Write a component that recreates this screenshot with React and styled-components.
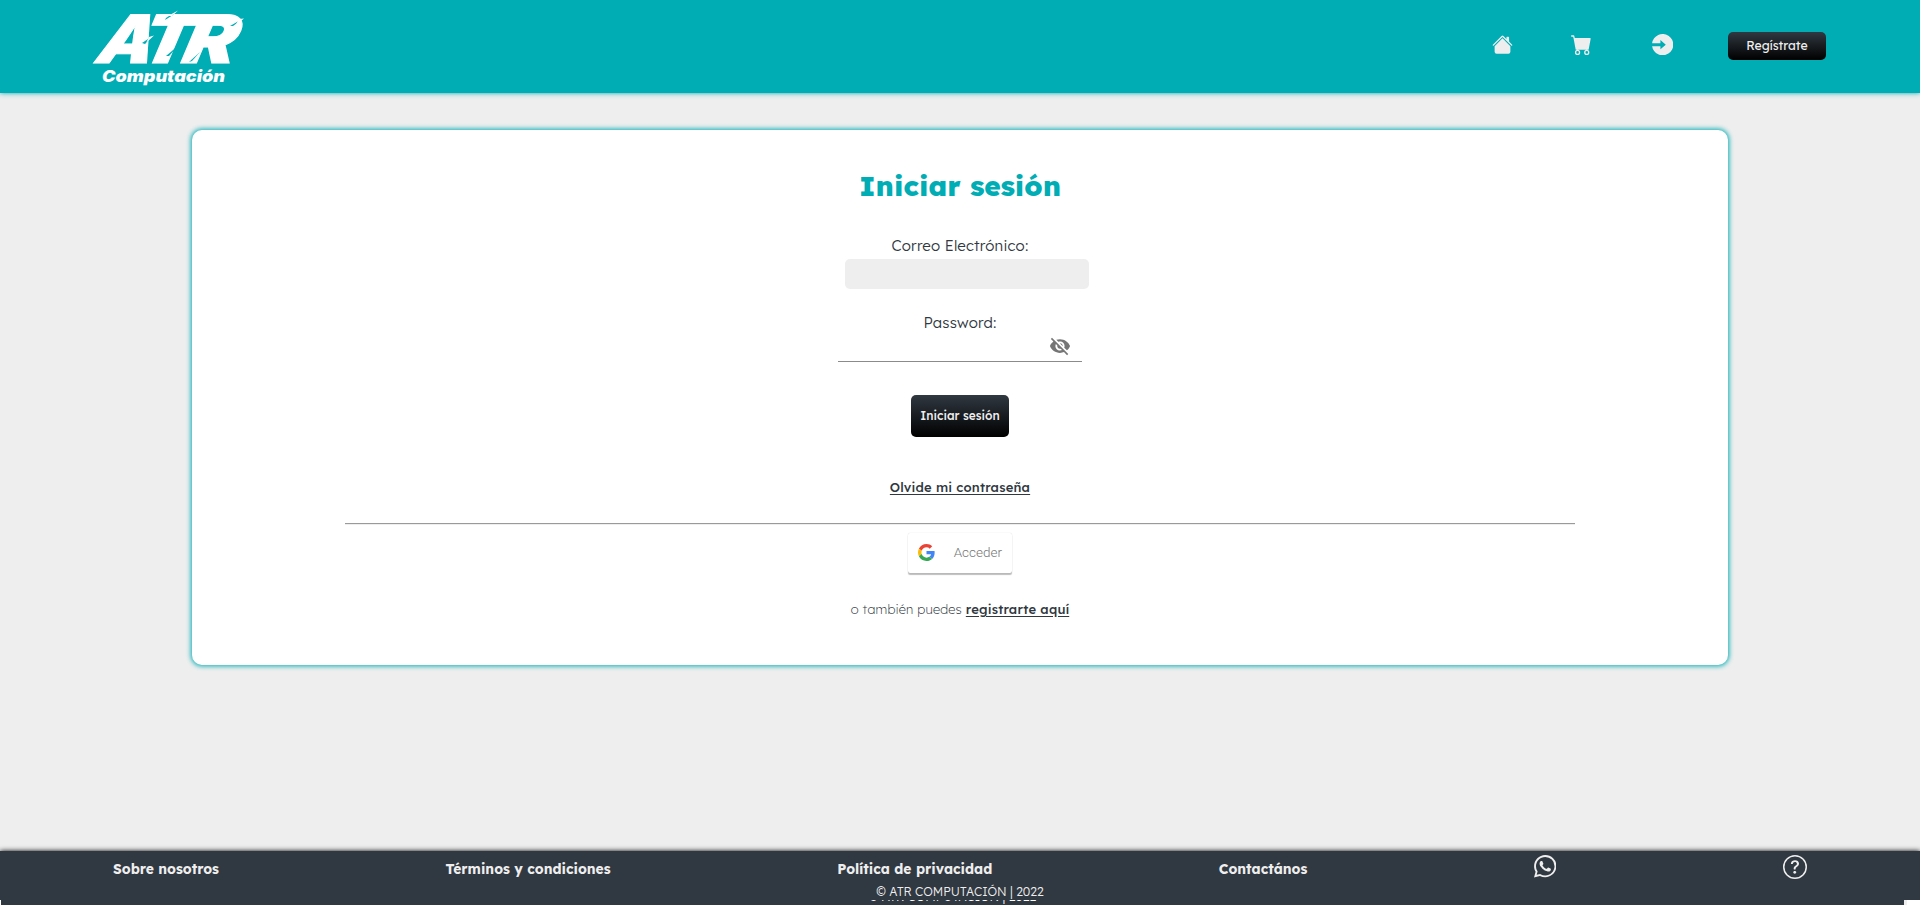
import React from "react";
import styled, { createGlobalStyle } from "styled-components";
import { BsWhatsapp, BsQuestionCircle, BsHouseFill, BsCartFill } from "react-icons/bs";
import { MdVisibilityOff } from "react-icons/md";

const Global = createGlobalStyle`
  * { box-sizing: border-box; }
  html { background: #fff; }
  body { margin: 0; overflow: hidden; font-family: Lexend, Inter, "Open Sans", sans-serif; color: #303841; }
`;

const Page = styled.div`
  width: 1920px;
  height: 900px;
  display: flex;
  flex-direction: column;
  align-items: center;
  overflow: hidden;
  background: #eee;
`;
const Header = styled.header`
  width: 100%;
  height: 93px;
  flex: none;
  display: flex;
  justify-content: space-between;
  padding: 0 94px 0 91px;
  background: #00adb5;
  box-shadow: 0 0 5px #00adb5;
`;
const LogoSvg = styled.svg`
  display: block;
  overflow: visible;
  margin-top: 9px;
`;
const Nav = styled.nav`
  display: flex;
  align-items: flex-start;
  color: #eee;
  padding-top: 32px;
`;
const IconLink = styled.a`
  width: ${(p) => p.$w}px;
  padding-top: ${(p) => p.$top || 2}px;
  svg { display: block; }
`;
const DarkButton = styled.button`
  width: 98px;
  height: ${(p) => p.$h}px;
  margin-top: ${(p) => p.$top || 0}px;
  padding: 0 0 1px;
  border: 0;
  border-radius: 5px;
  background: linear-gradient(#303841, #000);
  color: #eee;
  font: ${(p) => p.$weight || 400} ${(p) => p.$size}px Lexend, Inter, sans-serif;
  flex: none;
`;
const Card = styled.main`
  width: 1536px;
  height: 535px;
  flex: none;
  margin-top: 37px;
  border-radius: 10px;
  background: #fff;
  box-shadow: 0 0 5px 1px #00adb5;
  display: flex;
  flex-direction: column;
  align-items: center;
`;
const Title = styled.h1`
  margin: 33px 0 0;
  height: 44px;
  font-size: 28.1px;
  line-height: 46px;
  font-weight: 800;
  color: #00adb5;
`;
const Label = styled.label`
  display: block;
  height: 20px;
  line-height: 20px;
  margin-top: ${(p) => p.$top}px;
  font-size: 15px;
  font-weight: 300;
  letter-spacing: 0.2px;
`;
const Email = styled.input`
  width: 244px;
  height: 30px;
  margin: 3px 0 0 14px;
  border: 0;
  border-radius: 5px;
  background: #eee;
`;
const Password = styled.div`
  width: 244px;
  height: 29px;
  border-bottom: 1px solid #8b8b8b;
  display: flex;
  justify-content: flex-end;
  padding: 2px 11px 0 0;
  color: #757575;
`;
const TextLink = styled.a`
  font-weight: 500;
  text-decoration: underline;
  text-underline-offset: 1.5px;
  letter-spacing: 0.2px;
`;
const Forgot = styled.p`
  margin: 40px 0 0;
  height: 20px;
  line-height: 20px;
  font-size: 13px;
`;
const Rule = styled.hr`
  width: 1230px;
  height: 2px;
  border: 0;
  border-top: 1px solid #9a9a9a;
  border-bottom: 1px solid #eee;
  margin: 26px 0 0;
`;
const Google = styled.button`
  width: 104px;
  height: 40px;
  margin-top: 8px;
  padding: 0 10px 2px;
  display: flex;
  align-items: center;
  justify-content: space-between;
  border: 0;
  border-radius: 2px;
  background: #fff;
  box-shadow: 0 2px 1px rgba(0, 0, 0, 0.26), 0 0 1px rgba(0, 0, 0, 0.2);
  color: #757575;
  font: 300 13.5px Roboto, sans-serif;
`;
const Register = styled.p`
  margin: 26px 0 0;
  height: 20px;
  line-height: 20px;
  font-size: 13px;
  font-weight: 200;
  letter-spacing: 0.2px;
`;
const Footer = styled.footer`
  width: 100%;
  height: 49px;
  margin-top: auto;
  flex: none;
  background: #303841;
  box-shadow: 0 0 5px #000;
  color: #eee;
`;
const Links = styled.div`
  display: flex;
  justify-content: space-between;
  height: 32px;
  padding: 4px 113px 0 113px;
`;
const FooterLink = styled.a`
  font-size: 13.85px;
  line-height: 28px;
  font-weight: 700;
`;
const Copy = styled.p`
  margin: 0;
  text-align: center;
  font-size: 12.2px;
  font-weight: 300;
  line-height: 18px;
`;
/* Lower footer, of which only the last pixels of the text line show. */
const LowerFooter = styled.div`
  width: 1907px;
  height: 5px;
  overflow: hidden;
  display: flex;
  align-items: flex-end;
  border-left: 1px solid #fff;
  border-right: 3px solid #eee;
  background: #303841;
  color: #fff;
`;
const LowerCopy = styled(Copy)`
  flex: 1;
  height: 18px;
  margin-bottom: -1px;
`;

const Logo = () => (
  <LogoSvg width="160" height="78" viewBox="92 8 160 78" fill="#fff" fontFamily="Inter, sans-serif">
    <g transform="translate(0 61.500) skewX(-23)" fontSize="66.500" fontWeight="900" stroke="#fff" strokeWidth="1">
      <text x="93" y="0" textLength="56" lengthAdjust="spacingAndGlyphs">A</text>
      <text x="135" y="0" textLength="52" lengthAdjust="spacingAndGlyphs">T</text>
      <text x="178" y="0" textLength="53" lengthAdjust="spacingAndGlyphs">R</text>
    </g>
    <g fill="#00adb5">
      <path d="M179 9 167 17 166 19 174 14Z" />
      <path d="M155 34 143 42 146 43Z" />
      <path d="M180 44 167 55 170 55Z" />
      <path d="M201 51 190 61 193 60Z" />
      <path d="M245 17 231 25 234 25Z" />
    </g>
    <path d="M179 9.500 169 15H173ZM155 34.500 147 42 150 36ZM245 17.500 236 25 240 18Z" />
    <text x="103" y="80.500" fontSize="16.500" fontWeight="900" fontStyle="italic" textLength="123" lengthAdjust="spacingAndGlyphs">Computación</text>
  </LogoSvg>
);

const EnterIcon = () => (
  <svg width="21.300" height="21.300" viewBox="0 0 21 21" fill="currentColor">
    <path d="M.1 9A10.500 10.500 0 1 1 .1 12H8.300V15L13.600 10.500 8.300 6V9Z" />
  </svg>
);

const GoogleIcon = () => (
  <svg width="17" height="17" viewBox="0 0 48 48">
    <path fill="#EA4335" d="M24 9.500c3.540 0 6.710 1.220 9.210 3.600l6.850-6.850C35.900 2.380 30.470 0 24 0 14.620 0 6.510 5.380 2.560 13.220l7.980 6.190C12.430 13.720 17.740 9.500 24 9.500z" />
    <path fill="#4285F4" d="M46.980 24.550c0-1.570-.15-3.090-.38-4.550H24v9.020h12.940c-.58 2.960-2.260 5.480-4.780 7.180l7.730 6c4.510-4.180 7.090-10.360 7.090-17.650z" />
    <path fill="#FBBC05" d="M10.530 28.590c-.48-1.450-.76-2.990-.76-4.590s.27-3.140.76-4.590l-7.980-6.190C.92 16.460 0 20.120 0 24c0 3.880.92 7.540 2.560 10.780l7.970-6.190z" />
    <path fill="#34A853" d="M24 48c6.480 0 11.930-2.130 15.890-5.810l-7.730-6c-2.150 1.450-4.920 2.300-8.160 2.300-6.260 0-11.570-4.220-13.470-9.910l-7.980 6.190C6.510 42.620 14.620 48 24 48z" />
  </svg>
);

export default function App() {
  return (
    <>
      <Global />
      <Page>
        <Header>
          <Logo />
          <Nav>
            <IconLink $w={79}><BsHouseFill size={21} /></IconLink>
            <IconLink $w={81}><BsCartFill size={21} /></IconLink>
            <IconLink $w={76}><EnterIcon /></IconLink>
            <DarkButton $h={28} $size={12.3}>Regístrate</DarkButton>
          </Nav>
        </Header>
        <Card>
          <Title>Iniciar sesión</Title>
          <Label $top={29}>Correo Electrónico:</Label>
          <Email />
          <Label $top={24}>Password:</Label>
          <Password><MdVisibilityOff size={22} /></Password>
          <DarkButton $h={42} $top={33} $weight={500} $size={11.9}>Iniciar sesión</DarkButton>
          <Forgot><TextLink>Olvide mi contraseña</TextLink></Forgot>
          <Rule />
          <Google><GoogleIcon />Acceder</Google>
          <Register>o también puedes <TextLink>registrarte aquí</TextLink></Register>
        </Card>
        <Footer>
          <Links>
            <FooterLink>Sobre nosotros</FooterLink>
            <FooterLink>Términos y condiciones</FooterLink>
            <FooterLink>Política de privacidad</FooterLink>
            <FooterLink>Contactános</FooterLink>
            <BsWhatsapp size={22.5} />
            <BsQuestionCircle size={24} />
          </Links>
          <Copy>© ATR COMPUTACIÓN | 2022</Copy>
        </Footer>
      </Page>
      <LowerFooter>
        <LowerCopy>© ATR COMPUTACIÓN | 2022</LowerCopy>
      </LowerFooter>
    </>
  );
}
